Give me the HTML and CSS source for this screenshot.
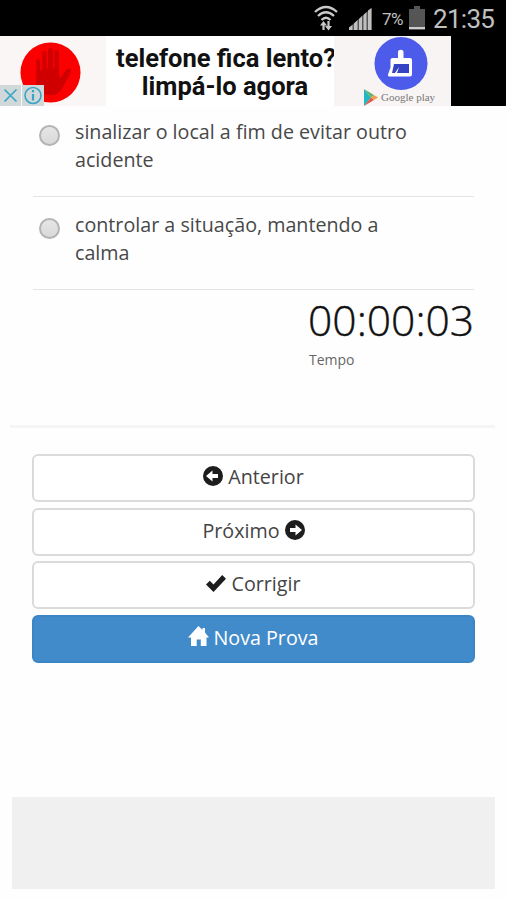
FILE: index.html
```html
<!DOCTYPE html>
<html lang="pt-BR">
<head>
<meta charset="utf-8">
<title>Simulado</title>
<link rel="stylesheet" href="styles.css">
</head>
<body>
<header class="status">
  <svg class="wifi" width="24" height="26" viewBox="0 0 24 26" fill="none" stroke="#c9c9c9" stroke-width="2.3">
    <path d="M1 7Q12-3 23 7M4 11Q12 3.500 20 11M7.500 15Q12 10.500 16.500 15"/>
    <path d="M9.500 25v-7M14.500 16v7" stroke-width="2.200"/>
    <path d="M6 20.500 9.500 16l3.500 4.500zM11 21h7l-3.500 4.500z" fill="#c9c9c9" stroke="none"/>
  </svg>
  <svg class="signal" width="23" height="22" viewBox="0 0 23 22" fill="#c0c0c0">
    <path d="M0 22v-2.500L3.500 17v5zM5 22v-6.500L8.500 12v10zM10 22V11l3-3v14zM14.500 22V7l3-3v18zM19 22V2.500L22.500 0v22z"/>
    <path d="M0 19.500 22.500 0v22H0z" opacity=".45"/>
  </svg>
  <span class="percent">7%</span>
  <svg class="battery" width="16" height="24" viewBox="0 0 16 24">
    <path fill="#555" d="M5 0h6v3h5v21H0V3h5z"/><path fill="#ccc" d="M0 21h16v2H0z"/>
  </svg>
  <span class="clock">21:35</span>
</header>
<section class="ad-row">
  <div class="ad">
    <div class="ad-side">
      <svg class="hand" width="61" height="61" viewBox="0 0 62 62">
        <circle cx="31" cy="31" r="30.500" fill="#fb0000"/>
        <path fill="#d00000" d="M16.500 20c0-4 4-4 4 0v9l2-1V12c0-4 4.500-4 4.500 0v15h1.500V9c0-4 5-4 5 0v18H35V11c0-4 4.500-4 4.500 0v19l1 7 6-8c2-3 7-2 5 2l-8 15c-3 6-7 8-13 8-9 0-14-5-14-12z"/>
      </svg>
      <div class="ad-choices">
        <svg width="21" height="21" viewBox="0 0 21 21" fill="none" stroke="#38a5c5" stroke-width="1.600"><path d="m4.500 4.500 12 12m0-12-12 12"/></svg>
        <svg width="22" height="21" viewBox="0 0 22 21" fill="none" stroke="#38a5c5" stroke-width="1.600"><circle cx="11" cy="10.500" r="8"/><path d="M11 9v6.500M11 5v2.200" stroke-width="2.200"/></svg>
      </div>
    </div>
    <p class="ad-copy">telefone fica lento?<br>limpá-lo agora</p>
    <div class="ad-brand">
      <svg width="54" height="53" viewBox="0 0 54 53">
        <circle cx="27" cy="26.500" r="26.500" fill="#4c5bea"/>
        <path fill="#fff" d="M24 15c0-3 5.500-3 5.500 0v6H36q2 0 2 2v14.500q0 2-2 2H16q-2.500 0-2-2l2.500-7V23q0-2 2-2H24z"/>
        <path fill="#3543c4" d="M20 27h15v9H23l2-6-4 6h-3z"/>
      </svg>
      <div class="play">
        <svg width="14" height="17" viewBox="0 0 14 17"><path fill="#25b6c4" d="M0 0v17l7-8.500z"/><path fill="#65b36a" d="m0 0 10 6-3 2.500z"/><path fill="#e2574c" d="m0 17 10-6-3-2.500z"/><path fill="#f0a04b" d="m10 6 4 2.500L10 11 7 8.500z"/></svg>
        <span>Google play</span>
      </div>
    </div>
  </div>
</section>
<main>
  <ul class="options">
    <li><i class="radio"></i><span>sinalizar o local a fim de evitar outro<br>acidente</span></li>
    <li><i class="radio"></i><span>controlar a situação, mantendo a<br>calma</span></li>
  </ul>
  <div class="timer"><div class="time">00:00:03</div><div class="label">Tempo</div></div>
  <hr>
  <nav>
    <a class="btn"><svg width="20" height="20" viewBox="0 0 20 20"><circle cx="10" cy="10" r="10" fill="#1d1d1d"/><path fill="#fff" d="m3 10 6.500-5.500V8H15v4H9.500v3.500z"/></svg><span>Anterior</span></a>
    <a class="btn"><span>Próximo</span><svg width="20" height="20" viewBox="0 0 20 20"><circle cx="10" cy="10" r="10" fill="#1d1d1d"/><path fill="#fff" d="m17 10-6.500-5.500V8H5v4h5.500v3.500z"/></svg></a>
    <a class="btn"><svg width="20" height="17" viewBox="0 0 20 17"><path fill="#1d1d1d" d="m0 9.500 3.800-3.800 3.700 3.800L16.200 0 20 3.800 7.500 17z"/></svg><span>Corrigir</span></a>
    <a class="btn primary"><svg width="21" height="21" viewBox="0 0 21 21"><path fill="#fff" d="M10.500 0 14.500 4V2H17v4.500L21 11.500h-2.500V20h-5.700v-6.500H8.700V20H3v-8.500H0z"/></svg><span>Nova Prova</span></a>
  </nav>
  <div class="placeholder"></div>
</main>
</body>
</html>
```
FILE: styles.css
```css
* { box-sizing: border-box; }
body { margin: 0; width: 506px; height: 900px; overflow: hidden; background: #fefefe; color: #484848; font: 19.7px/28px "Open Sans", sans-serif; }
svg { display: block; flex: none; }
.status { height: 36px; background: #000; color: #c0c0c0; display: flex; align-items: flex-start; padding-left: 314px; font-family: Roboto, sans-serif; white-space: nowrap; }
.wifi { margin-top: 5px; }
.signal { margin: 8px 0 0 11px; }
.percent { margin: 5px 0 0 10px; width: 23px; font-size: 17px; letter-spacing: -.5px; }
.battery { margin: 6px 0 0 4px; }
.clock { margin: 5px 0 0 8px; font-size: 26px; letter-spacing: -.7px; }
.ad-row { height: 70px; background: #000; }
.ad { width: 451px; height: 70px; background: #fff; display: flex; justify-content: space-between; }
.ad-side { position: relative; width: 106px; background: #f9f6f5; padding: 6px 0 0 20px; }
.ad-choices { position: absolute; left: 0; bottom: 0; display: flex; gap: 1px; }
.ad-choices svg { background: #d0d8da; }
.ad-copy { margin: 8px 0 0; width: 228px; padding-left: 10px; text-align: center; font: 700 25.5px/28px Roboto, sans-serif; color: #111; white-space: nowrap; }
.ad-brand { width: 117px; background: #f7f4f3; padding: 1px 0 0 40px; }
.play { display: flex; gap: 3px; margin: -1px 0 0 -10px; height: 17px; font: 11px/17px "Liberation Serif", serif; color: #777; white-space: nowrap; }
.options { list-style: none; margin: 0 32px 0 33px; padding: 0; }
.options li { height: 93px; padding: 14px 0 0 6px; display: flex; gap: 15px; border-bottom: 1px solid #e4e4e4; white-space: nowrap; }
.options li:first-child { height: 91px; padding-top: 12px; }
.radio { flex: none; width: 21px; height: 21px; margin-top: 7px; border: 2px solid #b4b4b4; border-radius: 50%; background: linear-gradient(#e6e6e6, #d9d9d9); }
.timer { margin-left: 308px; height: 135px; padding-top: 1px; white-space: nowrap; }
.time { font-size: 42.6px; font-weight: 300; line-height: 56px; color: #111; -webkit-text-stroke: .4px #111; }
.label { margin: 3px 0 0 1px; font-size: 14px; line-height: 20px; color: #666; }
hr { margin: 0 11px 0 10px; height: 3px; border: 0; background: #f5f5f5; }
nav { margin: 26px 31px 0 32px; display: grid; gap: 5.500px; }
.btn { height: 48px; padding-bottom: 2px; border: 2px solid #dadada; border-radius: 6px; background: #fff; display: flex; align-items: center; justify-content: center; gap: 5px; color: #444; }
.btn svg { margin-top: -2px; }
.primary { gap: 4px; background: #428bca; border-color: #3c85c4; color: #fff; }
.placeholder { height: 92px; margin: 134px 11px 0 12px; background: #f0f0f0; }
```
